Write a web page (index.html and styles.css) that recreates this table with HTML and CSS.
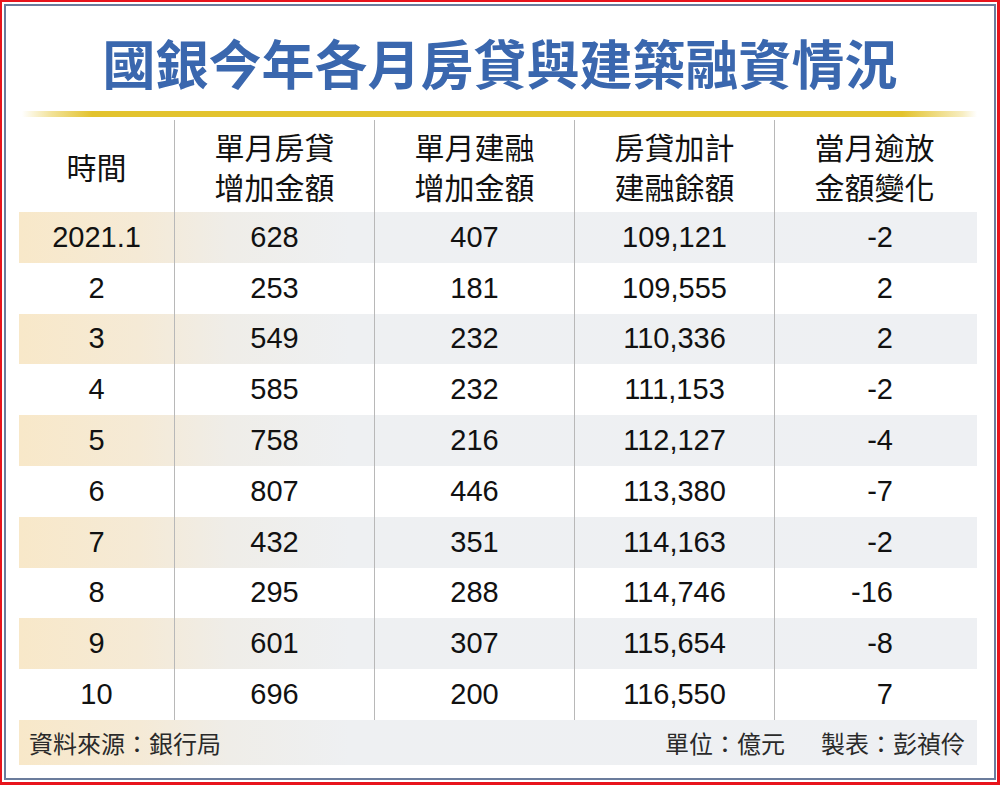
FILE: index.html
```html
<!DOCTYPE html>
<html lang="zh-Hant">
<head>
<meta charset="utf-8">
<title>國銀今年各月房貸與建築融資情況</title>
<link rel="stylesheet" href="styles.css">
</head>
<body>
<div class="frame">
  <div class="card">
    <h1 class="title">國銀今年各月房貸與建築融資情況</h1>
    <div class="goldline"></div>
    <div class="table">
      <div class="row head">
        <div class="cell">時間</div>
        <div class="cell">單月房貸<br>增加金額</div>
        <div class="cell">單月建融<br>增加金額</div>
        <div class="cell">房貸加計<br>建融餘額</div>
        <div class="cell">當月逾放<br>金額變化</div>
      </div>
      <div class="row band"><div class="cell">2021.1</div><div class="cell">628</div><div class="cell">407</div><div class="cell">109,121</div><div class="cell num-r">-2</div></div>
      <div class="row"><div class="cell">2</div><div class="cell">253</div><div class="cell">181</div><div class="cell">109,555</div><div class="cell num-r">2</div></div>
      <div class="row band"><div class="cell">3</div><div class="cell">549</div><div class="cell">232</div><div class="cell">110,336</div><div class="cell num-r">2</div></div>
      <div class="row"><div class="cell">4</div><div class="cell">585</div><div class="cell">232</div><div class="cell">111,153</div><div class="cell num-r">-2</div></div>
      <div class="row band"><div class="cell">5</div><div class="cell">758</div><div class="cell">216</div><div class="cell">112,127</div><div class="cell num-r">-4</div></div>
      <div class="row"><div class="cell">6</div><div class="cell">807</div><div class="cell">446</div><div class="cell">113,380</div><div class="cell num-r">-7</div></div>
      <div class="row band"><div class="cell">7</div><div class="cell">432</div><div class="cell">351</div><div class="cell">114,163</div><div class="cell num-r">-2</div></div>
      <div class="row"><div class="cell">8</div><div class="cell">295</div><div class="cell">288</div><div class="cell">114,746</div><div class="cell num-r">-16</div></div>
      <div class="row band"><div class="cell">9</div><div class="cell">601</div><div class="cell">307</div><div class="cell">115,654</div><div class="cell num-r">-8</div></div>
      <div class="row"><div class="cell">10</div><div class="cell">696</div><div class="cell">200</div><div class="cell">116,550</div><div class="cell num-r">7</div></div>
      <div class="footer">
        <span class="source">資料來源：銀行局</span>
        <span class="credits"><span>單位：億元</span><span>製表：彭禎伶</span></span>
      </div>
    </div>
  </div>
</div>
</body>
</html>
```

FILE: styles.css
```css
html, body {
  margin: 0;
  padding: 0;
  background: #ffffff;
}
body {
  font-family: "Noto Sans CJK TC", "Noto Sans CJK SC", sans-serif;
}
.frame {
  width: 1000px;
  height: 785px;
  box-sizing: border-box;
  border-style: solid;
  border-color: #e8141c;
  border-width: 2px 3px 3px 2px;
  padding: 2px 1px 2px 2px;
  background: #fff;
}
.card {
  height: 100%;
  box-sizing: border-box;
  border: 2px solid #6b7c9c;
  display: flex;
  flex-direction: column;
}
.title {
  margin: 0;
  height: 105px;
  box-sizing: border-box;
  padding-top: 8px;
  display: flex;
  align-items: center;
  justify-content: center;
  font-size: 53px;
  font-weight: 700;
  color: #3a67ae;
  line-height: 1;
  letter-spacing: 0;
}
.goldline {
  height: 6px;
  margin: 0 17px 3px 16px;
  background: linear-gradient(to right, rgba(228,196,46,0) 0px, rgba(228,196,46,0.5) 30px, #e3c32d 70px, #e3c32d 880px, rgba(228,196,46,0.3) 940px, rgba(228,196,46,0) 100%);
}
.table {
  margin: 0 17px 0 13px;
  display: flex;
  flex-direction: column;
}
.row {
  display: grid;
  grid-template-columns: 155px 200px 200px 200px 200px;
  height: 50.8px;
}
.row.head {
  height: 92px;
}
.cell {
  display: flex;
  align-items: center;
  justify-content: center;
  text-align: center;
  font-family: "Liberation Sans", Arial, sans-serif;
  font-size: 29px;
  color: #111;
}
.cell + .cell {
  border-left: 1px solid #b8b8b8;
}
.head .cell {
  font-family: "Noto Sans CJK TC", "Noto Sans CJK SC", sans-serif;
  font-size: 30px;
  line-height: 40px;
  color: #111;
  padding-top: 0;
}
.cell.num-r {
  justify-content: flex-end;
  padding-right: 81px;
}
.band {
  background: linear-gradient(to right, #f8e8c9 0px, #f5ead6 120px, #efede8 210px, #eef0f2 330px, #eef0f3 100%);
}
.footer {
  height: 45px;
  display: flex;
  align-items: center;
  justify-content: space-between;
  padding: 0 12px 0 10px;
  background: linear-gradient(to right, #f8e8c9 0px, #f5ead6 120px, #efede8 210px, #eef0f2 330px, #eef0f3 100%);
  font-size: 24px;
  color: #2a2a2a;
}
.credits {
  display: flex;
  gap: 36px;
}
```
